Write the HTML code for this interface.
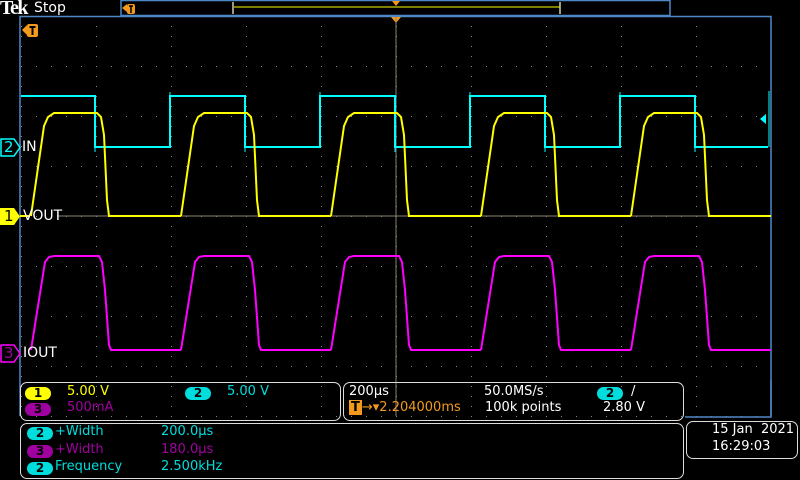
<!DOCTYPE html>
<html><head><meta charset="utf-8"><style>
body{margin:0;background:#000;width:800px;height:480px;overflow:hidden;position:relative;font-family:"DejaVu Sans","Liberation Sans",sans-serif}
.t{position:absolute;font-size:13px;white-space:nowrap;line-height:14px}
.box{position:absolute;border:1.5px solid #ddd;border-radius:7px}
.pill{position:absolute;height:13px;border-radius:7px;font-size:12px;font-weight:bold;color:#000;text-align:center;line-height:13px;width:26px}
</style></head><body>
<svg width="800" height="480" style="position:absolute;left:0;top:0">
<defs>
<pattern id="pv" x="21" y="16" width="75" height="10" patternUnits="userSpaceOnUse"><rect width="1" height="1" fill="#888"/></pattern>
<pattern id="ph" x="21" y="16" width="15" height="50" patternUnits="userSpaceOnUse"><rect width="1" height="1" fill="#888"/></pattern>
<clipPath id="cl"><rect x="20" y="16" width="751" height="400"/></clipPath>
<path id="yp" d="M31 216 L44 126 L48 117 L54 113 L97 113 L101 117 L104 135 L107 200 L109 216 L181 216" fill="none" stroke="#ffff00" stroke-width="2"/>
<path id="pp" d="M31 350 L45 262 L49 257 L54 256 L99 256 L102 262 L105 290 L109 345 L111 350 L181 350" fill="none" stroke="#ff00ff" stroke-width="2"/>
</defs>
<rect x="21" y="17" width="750" height="400" fill="url(#pv)"/>
<rect x="21" y="17" width="750" height="400" fill="url(#ph)"/>
<path d="M20 416 V16.5 H771 V416" fill="none" stroke="#4f88c8" stroke-width="1.5"/>
<rect x="121" y="0.5" width="549" height="15" fill="#000" stroke="#4f88c8" stroke-width="1.5"/>
<path d="M233 2 V14 M560 2 V14" stroke="#a09880" stroke-width="2"/>
<line x1="234" y1="7" x2="560" y2="7" stroke="#ffff00" stroke-width="1"/>
<path d="M392 1 L400 1 L396 6 Z" fill="#f39a1e"/>
<path d="M391 17 L401 17 L396 23 Z" fill="#f39a1e"/>
<line x1="396" y1="17" x2="396" y2="416" stroke="#8a8270" stroke-width="1"/>
<line x1="57" y1="216" x2="771" y2="216" stroke="#8a8270" stroke-width="1"/>
<path d="M122 8 L127 4 L127 12 Z" fill="#f39a1e"/><rect x="127" y="4" width="8" height="10" rx="2" fill="#f39a1e"/>
<path d="M129 6 H133 M131 6 V13" stroke="#000" stroke-width="1.5"/>
<path d="M22 30 L27 25 L27 35 Z" fill="#f39a1e"/><rect x="27" y="24" width="11" height="13" rx="2" fill="#f39a1e"/>
<path d="M29.5 27 H35.5 M32.5 27 V35" stroke="#000" stroke-width="2"/>
<g clip-path="url(#cl)">
<path d="M21 96 H95 V147 H170 V96 H245 V147 H320 V96 H395 V147 H470 V96 H545 V147 H620 V96 H695 V147 H768" fill="none" stroke="#00ffff" stroke-width="2"/>
<path d="M95 147 V152 M170 96 V92 M245 147 V152 M320 96 V92 M395 147 V152 M470 96 V92 M545 147 V152 M620 96 V92 M695 147 V152" stroke="#00ffff" stroke-width="1"/>
<use href="#yp"/><use href="#yp" x="150"/><use href="#yp" x="300"/><use href="#yp" x="450"/><use href="#yp" x="600"/>
<path d="M20 216 H30" stroke="#ffff00" stroke-width="2"/>
<use href="#pp"/><use href="#pp" x="150"/><use href="#pp" x="300"/><use href="#pp" x="450"/><use href="#pp" x="600"/>
</g>
<path d="M769 91 V147" stroke="#00ffff" stroke-width="1"/>
<path d="M760 119 L766 114 L766 124 Z" fill="#00ffff"/>
<path d="M1 139 H14 L20 147.5 L14 156 H1 Z" fill="#000" stroke="#00ffff" stroke-width="1.5"/>
<path d="M0 208 H14 L20 216.5 L14 225 H0 Z" fill="#ffff00"/>
<path d="M1 345 H14 L20 353.5 L14 362 H1 Z" fill="#000" stroke="#ff00ff" stroke-width="1.5"/>
<path d="M771 380 V417 H685" fill="none" stroke="#4f88c8" stroke-width="1.5"/>
</svg>
<div class="t" style="left:0;top:-2px;color:#fff;font-family:'Liberation Serif',serif;font-weight:bold;font-size:20px;line-height:20px;letter-spacing:-1.5px">Tek</div>
<div class="t" style="left:34px;top:0px;color:#fff;font-size:14px;line-height:16px">Stop</div>
<div class="t" style="left:4px;top:139px;color:#00ffff;font-size:15px;line-height:17px">2</div>
<div class="t" style="left:22px;top:139px;color:#fff;font-size:14px;line-height:17px">IN</div>
<div class="t" style="left:4px;top:208px;color:#000;font-size:15px;line-height:17px">1</div>
<div class="t" style="left:23px;top:208px;color:#fff;font-size:14px;line-height:17px">VOUT</div>
<div class="t" style="left:4px;top:345px;color:#a000a0;font-size:15px;line-height:17px">3</div>
<div class="t" style="left:23px;top:345px;color:#fff;font-size:14px;line-height:17px">IOUT</div>

<div class="box" style="left:20px;top:382px;width:319px;height:37px"></div>
<div class="box" style="left:343px;top:382px;width:339px;height:37px"></div>
<div class="box" style="left:20px;top:423px;width:662px;height:54px"></div>
<div class="box" style="left:686px;top:421px;width:110px;height:36px"></div>

<div class="pill" style="left:25px;top:387px;background:#ffff00">1</div>
<div class="t" style="left:67px;top:385px;color:#ffff00">5.00 V</div>
<div class="pill" style="left:185px;top:387px;background:#00dddd">2</div>
<div class="t" style="left:227px;top:385px;color:#00dddd">5.00 V</div>
<div class="pill" style="left:25px;top:403px;background:#a000a0">3</div>
<div class="t" style="left:67px;top:401px;color:#a000a0">500mA</div>

<div class="t" style="left:349px;top:385px;color:#fff">200µs</div>
<div class="t" style="left:484px;top:385px;color:#fff">50.0MS/s</div>
<div class="pill" style="left:597px;top:387px;background:#00dddd">2</div>
<div class="t" style="left:631px;top:385px;color:#fff">/</div>
<div class="t" style="left:349px;top:401px;color:#f39a1e"><span style="background:#f39a1e;color:#000;font-weight:bold;padding:0 2px">T</span>→▾2.204000ms</div>
<div class="t" style="left:485px;top:401px;color:#fff">100k points</div>
<div class="t" style="left:603px;top:401px;color:#fff">2.80 V</div>

<div class="pill" style="left:27px;top:427px;background:#00dddd">2</div>
<div class="t" style="left:55px;top:425px;color:#00dddd">+Width</div>
<div class="t" style="left:161px;top:425px;color:#00dddd">200.0µs</div>
<div class="pill" style="left:27px;top:445px;background:#a000a0">3</div>
<div class="t" style="left:55px;top:443px;color:#a000a0">+Width</div>
<div class="t" style="left:161px;top:443px;color:#a000a0">180.0µs</div>
<div class="pill" style="left:27px;top:462px;background:#00dddd">2</div>
<div class="t" style="left:55px;top:460px;color:#00dddd">Frequency</div>
<div class="t" style="left:161px;top:460px;color:#00dddd">2.500kHz</div>

<div class="t" style="left:712px;top:423px;color:#fff">15 Jan&nbsp; 2021</div>
<div class="t" style="left:712px;top:440px;color:#fff">16:29:03</div>
</body></html>
